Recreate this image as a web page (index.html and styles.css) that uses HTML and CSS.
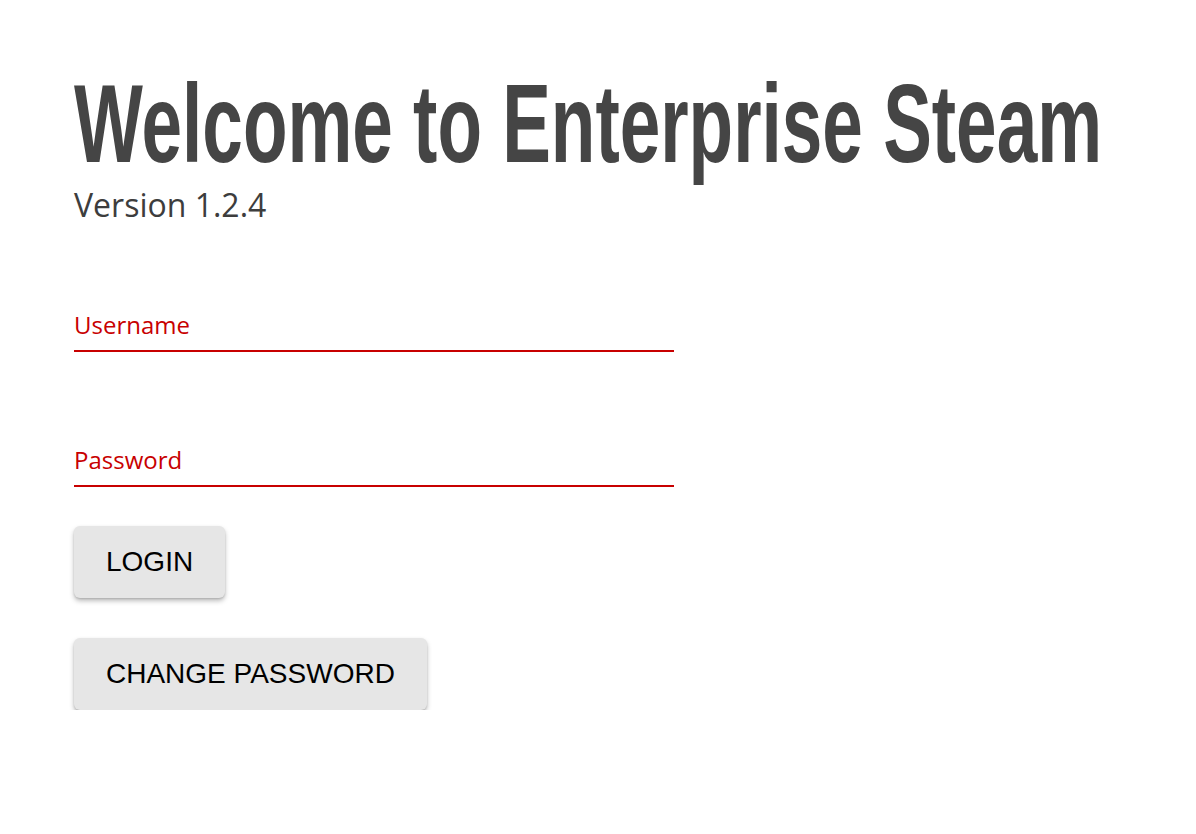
FILE: index.html
```html
<!DOCTYPE html>
<html lang="en">
<head>
<meta charset="utf-8">
<title>Enterprise Steam</title>
<link rel="stylesheet" href="styles.css">
</head>
<body>
<main class="page">
  <header class="intro">
    <h1 class="title">Welcome to Enterprise Steam</h1>
    <p class="version">Version 1.2.4</p>
  </header>
  <form class="login-form">
    <label class="field">
      <span class="field-label">Username</span>
      <input class="field-input" type="text" name="username">
    </label>
    <label class="field">
      <span class="field-label">Password</span>
      <input class="field-input" type="password" name="password">
    </label>
    <div class="actions">
      <button type="button" class="btn">LOGIN</button>
      <button type="button" class="btn">CHANGE PASSWORD</button>
    </div>
  </form>
</main>
</body>
</html>
```
FILE: styles.css
```css
* { box-sizing: border-box; }
html, body { margin: 0; padding: 0; background: #fff; }
body { font-family: "Open Sans", "Liberation Sans", sans-serif; }

.page {
  padding: 69px 0 0 74px;
}

.intro { display: flex; flex-direction: column; align-items: flex-start; }

.title {
  margin: 0;
  font-family: "Liberation Sans", Arial, sans-serif;
  font-weight: 700;
  font-size: 111px;
  line-height: 110px;
  color: #454545;
  white-space: nowrap;
  transform: scaleX(0.657);
  transform-origin: left center;
  letter-spacing: 0;
}

.version {
  margin: 7px 0 0;
  font-size: 32px;
  line-height: 38px;
  color: #3d3d3d;
}

.login-form {
  display: flex;
  flex-direction: column;
  margin-top: 86px;
}

.field {
  display: flex;
  flex-direction: column;
  width: 600px;
  border-bottom: 2px solid #c80000;
}
.field + .field { margin-top: 93px; }

.field-label {
  font-size: 24px;
  line-height: 29px;
  color: #c80000;
}

.field-input {
  border: 0;
  outline: 0;
  height: 11px;
  padding: 0;
  background: transparent;
}

.actions {
  display: flex;
  flex-direction: column;
  align-items: flex-start;
  gap: 40px;
  margin-top: 39px;
}

.btn {
  height: 72px;
  padding: 0 32px;
  border: 0;
  border-radius: 6px;
  background: #e6e6e6;
  color: #000;
  font-family: "Liberation Sans", Arial, sans-serif;
  font-size: 28px;
  line-height: 72px;
  box-shadow: 0 3px 5px rgba(0,0,0,0.26), 0 1px 2px rgba(0,0,0,0.12);
  cursor: pointer;
}
```
